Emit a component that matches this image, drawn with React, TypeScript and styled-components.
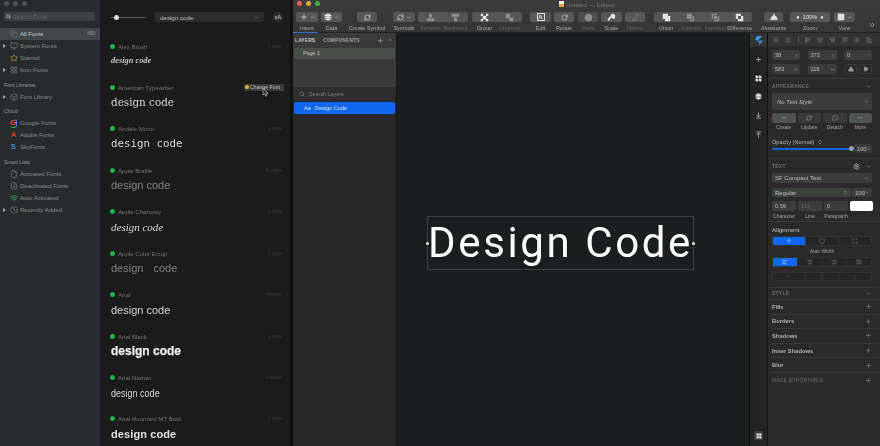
import { ReactNode } from "react";
import styled, { createGlobalStyle } from "styled-components";
import {
  ArrowDownToLine, ArrowUpToLine, ChevronDown, ChevronsRight, ChevronsUpDown, Clock,
  Copy, ConciergeBell, File, FileX, Layers, LayoutGrid, Monitor,
  MoreHorizontal, PanelLeft, PenLine, Plus, RefreshCw, RotateCw, Search, Settings,
  Star, Triangle, Play, Unlink, Wifi, Box, AlignLeft, AlignCenter, AlignRight, AlignJustify, SquareDashed,
  Maximize, ArrowUp, ArrowDown, MoveVertical, AlignStartVertical, AlignCenterVertical, AlignEndVertical,
  AlignStartHorizontal, AlignCenterHorizontal, AlignEndHorizontal, AlignHorizontalSpaceAround, AlignVerticalSpaceAround,
} from "lucide-react";

const Global = createGlobalStyle`
  html, body { margin: 0; padding: 0; background: #1a1a1a; }
  * { box-sizing: border-box; }
`;

const Screen = styled.div`
  width: 880px;
  height: 446px;
  display: flex;
  overflow: hidden;
  font-family: "Liberation Sans", Arial, sans-serif;
  filter: blur(0.35px);
`;

/* left: font manager sidebar */
const Sidebar = styled.aside`
  width: 100px;
  flex: none;
  background: #262c2d;
  display: flex;
  flex-direction: column;
`;

const Lights = styled.div<{ $x: number; $gap: number }>`
  height: 8px;
  display: flex;
  gap: ${(p) => p.$gap}px;
  padding: 1px 0 0 ${(p) => p.$x}px;
  flex: none;
`;

const Light = styled.span<{ $c: string }>`
  width: 5px;
  height: 5px;
  border-radius: 50%;
  background: ${(p) => p.$c};
`;

const SearchBox = styled.div`
  height: 9px;
  margin: 4px 5px 7px 4px;
  background: #3a4142;
  border-radius: 2px;
  display: flex;
  align-items: center;
  gap: 2px;
  padding-left: 2px;
  font-size: 5.8px;
  color: #656c6d;
`;

const SideHeader = styled.div`
  height: 12px;
  margin-top: 3px;
  padding-left: 4px;
  line-height: 12px;
  font-size: 5.2px;
  color: #8f9596;
`;

const SideRow = styled.div<{ $active?: boolean }>`
  height: 11.9px;
  display: flex;
  align-items: center;
  position: relative;
  padding-left: 9px;
  font-size: 6px;
  color: ${(p) => (p.$active ? "#c4c9c9" : "#848b8c")};
  background: ${(p) => (p.$active ? "#414849" : "transparent")};
`;

const SideIcon = styled.span`
  width: 9px;
  display: flex;
  justify-content: center;
  margin-right: 2px;
  color: #727879;
`;

const Caret = styled.i`
  position: absolute;
  left: 3px;
  top: 4px;
  border-left: 3px solid #9aa0a1;
  border-top: 2px solid transparent;
  border-bottom: 2px solid transparent;
`;

const Count = styled.span`
  margin-left: auto;
  margin-right: 5px;
  font-size: 4.6px;
  color: #9aa0a1;
`;

const BrandG = styled.span`
  font-size: 8px;
  font-weight: bold;
  line-height: 8px;
  color: #e8483b;
  border-right: 1px solid #3c82f0;
  border-bottom: 1px solid #35a853;
  border-radius: 3px;
`;

const BrandA = styled.span<{ $c: string }>`
  font-size: 8px;
  font-weight: bold;
  line-height: 8px;
  color: ${(p) => p.$c};
`;

/* middle: list of font samples */
const FontPane = styled.section`
  width: 190px;
  flex: none;
  background: #1b1b1b;
  padding-top: 12px;
`;

const FontBar = styled.div`
  height: 10px;
  margin-bottom: 20px;
  display: flex;
  align-items: center;
  padding-left: 11px;
`;

const SizeTrack = styled.div`
  width: 35px;
  height: 1px;
  background: #555;
  position: relative;
  margin-right: 9px;
`;

const SizeKnob = styled.i`
  position: absolute;
  left: 3px;
  top: -2px;
  width: 5px;
  height: 5px;
  border-radius: 50%;
  background: #ddd;
`;

const SampleSelect = styled.div`
  width: 109px;
  height: 10px;
  background: #2c2c2c;
  border-radius: 2px;
  padding: 0 5px;
  display: flex;
  align-items: center;
  justify-content: space-between;
  font-size: 6.2px;
  color: #c0c0c0;
`;

const CaseButton = styled.div`
  width: 10px;
  height: 10px;
  margin-left: 9px;
  border-radius: 50%;
  background: #2e2e2e;
  color: #aaa;
  font-size: 5px;
  font-weight: bold;
  line-height: 10px;
  text-align: center;
`;

const FontRow = styled.div`
  height: 41.45px;
  padding: 0 8px 0 10px;
  position: relative;
`;

const FontHead = styled.div`
  height: 8px;
  display: flex;
  align-items: center;
  font-size: 6.1px;
  color: #737373;
`;

const Dot = styled.i`
  width: 5px;
  height: 5px;
  border-radius: 50%;
  background: #1fae4f;
  margin-right: 3px;
`;

const Styles = styled.span`
  margin-left: auto;
  font-size: 4.8px;
  color: #3a3a3a;
`;

const ChangeFont = styled.span`
  margin-left: auto;
  margin-right: -2px;
  width: 40px;
  height: 7px;
  background: #3b3b3b;
  border-radius: 1px;
  display: flex;
  align-items: center;
  gap: 1px;
  padding-left: 1px;
  font-size: 5.2px;
  color: #c0c0c0;
`;

const Bulb = styled.i`
  width: 4px;
  height: 4px;
  border-radius: 50% 50% 40% 40%;
  background: #e5aa24;
`;

const PointerMark = styled.svg`
  position: absolute;
  left: 162px;
  top: 5px;
`;

const sampleStyles: Record<string, string> = {
  brush: `font: italic bold 8.4px/14px "Liberation Serif", serif; color: #c4c4c4;`,
  typewriter: `font: 10.4px/14px "DejaVu Serif", serif; color: #d4d4d4;`,
  mono: `font: 10.8px/14px "DejaVu Sans Mono", monospace; color: #d8d8d8;`,
  braille: `font: 11px/14px "Liberation Sans", sans-serif; color: #808080;`,
  chancery: `font: italic 11px/14px "Liberation Serif", serif; color: #d8d8d8;`,
  emoji: `font: 11px/14px "Liberation Sans", sans-serif; color: #808080; word-spacing: 7px;`,
  arial: `font: 11px/14px "Liberation Sans", sans-serif; color: #d4d4d4;`,
  black: `font: bold 12px/14px "Liberation Sans", sans-serif; color: #ececec; -webkit-text-stroke: 0.25px #ececec;`,
  narrow: `font: 11px/14px "Liberation Sans", sans-serif; color: #d4d4d4; transform: scaleX(0.82); transform-origin: left;`,
  rounded: `font: bold 11px/14px "Liberation Sans", sans-serif; color: #e0e0e0; letter-spacing: 0.1px;`,
};

const Sample = styled.div<{ $kind: string }>`
  margin: 4px 0 0 1px;
  height: 14px;
  line-height: 14px;
  white-space: pre;
  ${(p) => sampleStyles[p.$kind]}
`;

const Gutter = styled.div`
  width: 3px;
  flex: none;
  background: #111;
`;

/* right: sketch window */
const Sketch = styled.main`
  flex: 1;
  min-width: 0;
  display: flex;
  flex-direction: column;
`;

const TitleBar = styled.header`
  height: 33px;
  flex: none;
  background: linear-gradient(#3c3c3c, #353535);
  border-bottom: 1px solid #222;
  position: relative;
`;

const WindowTitle = styled.div`
  position: absolute;
  left: 266px;
  top: 0;
  display: flex;
  align-items: center;
  gap: 2px;
  height: 8px;
  font-size: 6.2px;
  color: #737373;
`;

const DocIcon = styled.i`
  width: 5px;
  height: 6px;
  background: linear-gradient(#eee 50%, #d9a93a 50%);
`;

const Tools = styled.div`
  display: flex;
  margin-top: 4px;
`;

const Tool = styled.div<{ $w: number; $ml: number }>`
  width: ${(p) => p.$w}px;
  margin-left: ${(p) => p.$ml}px;
  flex: none;
`;

const ToolBtn = styled.div<{ $bg?: string }>`
  height: 10px;
  border-radius: 2px;
  background: ${(p) => p.$bg || "#565656"};
  display: flex;
  align-items: center;
  justify-content: center;
  color: #e4e4e4;
  font-size: 5.6px;
`;

const ToolCell = styled.span<{ $dim?: boolean }>`
  flex: 1 1 0;
  min-width: 0;
  display: flex;
  justify-content: center;
  align-items: center;
  gap: 2px;
  white-space: nowrap;
  color: ${(p) => (p.$dim ? "#8d8d8d" : "#e4e4e4")};
`;

const ToolLabels = styled.div`
  display: flex;
  margin-top: 3px;
`;

const ToolLabel = styled.span<{ $dim?: boolean }>`
  flex: 1 1 0;
  min-width: 0;
  display: flex;
  justify-content: center;
  white-space: nowrap;
  font-size: 5.5px;
  line-height: 6px;
  color: ${(p) => (p.$dim ? "#626262" : "#a8a8a8")};
`;

const LetterBox = styled.span`
  border: 1px solid #ddd;
  width: 8px;
  height: 8px;
  font-size: 6px;
  font-weight: bold;
  line-height: 6px;
  text-align: center;
`;

const Overflow = styled.div`
  margin: 3px 0 0 13px;
  color: #a9a9a9;
`;

const Body = styled.div`
  flex: 1;
  display: flex;
  min-height: 0;
`;

const LayersPane = styled.nav`
  width: 104px;
  flex: none;
  background: #272727;
  border-right: 1px solid #161616;
  display: flex;
  flex-direction: column;
`;

const PagesBlock = styled.div`
  height: 54px;
  background: #3a3a3a;
  position: relative;
`;

const TabMark = styled.i`
  position: absolute;
  left: 0;
  top: -1px;
  width: 25px;
  height: 1px;
  background: #2f6fd0;
`;

const Tabs = styled.div`
  height: 15px;
  display: flex;
  align-items: center;
  gap: 8px;
  padding: 0 3px 0 2px;
  font-size: 4.8px;
  font-weight: bold;
  letter-spacing: 0.2px;
  color: #9a9a9a;
`;

const ActiveTab = styled.span`
  color: #c8c8c8;
`;

const TabRight = styled.span`
  margin-left: auto;
  display: flex;
  gap: 3px;
  color: #a5a5a5;
`;

const PageRow = styled.div`
  height: 11px;
  margin: 0 1px;
  padding-left: 9px;
  background: #4a4f4a;
  border-radius: 2px;
  font-size: 5.4px;
  line-height: 11px;
  color: #c0c0c0;
`;

const LayerSearch = styled.div`
  height: 14px;
  background: #2d2d2d;
  display: flex;
  align-items: center;
  gap: 4px;
  padding-left: 6px;
  font-size: 5.4px;
  color: #808080;
`;

const LayerRow = styled.div`
  height: 12px;
  margin: 1px 1px 0;
  padding-left: 10px;
  display: flex;
  align-items: center;
  gap: 4px;
  background: #0f67f0;
  border-radius: 2px;
  font-size: 5.6px;
  color: #dfe7fa;
`;

const Canvas = styled.div`
  flex: 1;
  background: #1a1e1e;
  padding: 183px 55px 0 30px;
`;

const TextBox = styled.div`
  width: 267px;
  height: 54px;
  border: 1px solid #3a4141;
  position: relative;
  display: flex;
  align-items: center;
  justify-content: center;
  font: 42px/52px Roboto, sans-serif;
  letter-spacing: 2.6px;
  color: #fff;
  white-space: nowrap;
`;

const Handle = styled.i<{ $right?: boolean }>`
  position: absolute;
  top: 25px;
  ${(p) => (p.$right ? "right: -2px" : "left: -2px")};
  width: 3px;
  height: 3px;
  background: #eee;
  border-radius: 50%;
`;

const ToolStrip = styled.div`
  width: 19px;
  flex: none;
  background: #232323;
  border-left: 1px solid #111;
  border-right: 1px solid #111;
  display: flex;
  flex-direction: column;
  align-items: center;
`;

const StripTop = styled.div`
  width: 100%;
  height: 14px;
  background: #333;
  display: flex;
  align-items: center;
  justify-content: center;
  margin-bottom: 3.5px;
`;

const StripIcon = styled.div`
  height: 18.6px;
  display: flex;
  align-items: center;
  color: #e0e0e0;
`;

const StripBottom = styled.div`
  margin-top: auto;
  margin-bottom: 6px;
  width: 9px;
  height: 9px;
  background: #3a3a3a;
  border-radius: 1px;
  display: flex;
  align-items: center;
  justify-content: center;
  color: #e0e0e0;
`;

const Inspector = styled.aside`
  width: 112px;
  flex: none;
  background: #2a2a2a;
  font-size: 5.6px;
  color: #b4b4b4;
`;

const AlignBar = styled.div`
  height: 13px;
  background: #333;
  display: flex;
  align-items: center;
  justify-content: space-between;
  padding: 0 8px 0 5px;
  color: #767676;
`;

const AlignSep = styled.i`
  width: 1px;
  height: 6px;
  background: #555;
`;

const Section = styled.div<{ $pb?: number }>`
  padding: 0 8px ${(p) => p.$pb ?? 0}px 4px;
  border-bottom: 1px solid #393939;
`;

const PosRow = styled.div<{ $mt: number }>`
  display: flex;
  justify-content: space-between;
  margin-top: ${(p) => p.$mt}px;
`;

const Field = styled.div<{ $w?: number; $dim?: boolean; $white?: boolean; $h?: number }>`
  width: ${(p) => p.$w ?? 24}px;
  height: ${(p) => p.$h ?? 10}px;
  padding: 0 2px 0 3px;
  background: ${(p) => (p.$white ? "#fff" : "#3c3c3c")};
  border-radius: 2px;
  display: flex;
  align-items: center;
  justify-content: space-between;
  color: ${(p) => (p.$dim ? "#626262" : "#bcbcbc")};
`;

const Suffix = styled.span`
  font-size: 4.4px;
  color: #787878;
`;

const FlipGroup = styled.div`
  display: flex;
  gap: 2px;
`;

const FlipBtn = styled.div`
  width: 13px;
  height: 10px;
  border: 1px solid #383838;
  border-radius: 2px;
  display: flex;
  align-items: center;
  justify-content: center;
  color: #9a9a9a;
`;

const Head = styled.div<{ $h: number; $bright?: boolean }>`
  height: ${(p) => p.$h}px;
  display: flex;
  align-items: center;
  justify-content: space-between;
  font-size: ${(p) => (p.$bright ? 6.2 : 4.9)}px;
  font-weight: ${(p) => (p.$bright ? "normal" : "bold")};
  letter-spacing: ${(p) => (p.$bright ? 0 : 0.3)}px;
  color: ${(p) => (p.$bright ? "#c4c4c4" : "#6e6e6e")};
`;

const HeadIcons = styled.span`
  display: flex;
  align-items: center;
  gap: 5px;
  color: #8c8c8c;
`;

const Select = styled.div<{ $h: number; $italic?: boolean; $w?: number; $green?: boolean }>`
  height: ${(p) => p.$h}px;
  width: ${(p) => (p.$w ? `${p.$w}px` : "100%")};
  padding: 0 3px 0 ${(p) => (p.$italic ? 5 : 3)}px;
  background: ${(p) => (p.$green ? "#3b423a" : "#3c3c3c")};
  border-radius: 2px;
  display: flex;
  align-items: center;
  justify-content: space-between;
  font-style: ${(p) => (p.$italic ? "italic" : "normal")};
  font-size: 6px;
  color: #bcbcbc;
`;

const Quad = styled.div<{ $mt?: number }>`
  display: grid;
  grid-template-columns: repeat(4, 1fr);
  column-gap: 2px;
  margin-top: ${(p) => p.$mt ?? 3}px;
`;

const QuadBtn = styled.div<{ $on?: boolean }>`
  height: 10px;
  background: ${(p) => (p.$on ? "#4d5450" : "#393939")};
  border-radius: 2px;
  display: flex;
  align-items: center;
  justify-content: center;
  color: #9a9a9a;
`;

const QuadLabel = styled.div<{ $h?: number }>`
  height: ${(p) => p.$h ?? 9}px;
  line-height: ${(p) => p.$h ?? 9}px;
  text-align: center;
  font-size: 5px;
  white-space: nowrap;
  color: #a0a0a0;
`;

const OpacityRow = styled.div`
  height: 16px;
  margin-top: 5px;
  display: flex;
  justify-content: space-between;
  align-items: flex-end;
`;

const OpacityLeft = styled.div`
  width: 80px;
  height: 16px;
`;

const OpacityLabel = styled.div`
  height: 10px;
  line-height: 10px;
  font-size: 5.6px;
  display: flex;
  align-items: center;
  gap: 3px;
`;

const OpacityTrack = styled.div`
  height: 2px;
  margin-top: 0.5px;
  background: #1160d8;
  position: relative;
  border-radius: 1px;
`;

const OpacityKnob = styled.i`
  position: absolute;
  right: -2px;
  top: -1.5px;
  width: 5px;
  height: 5px;
  border-radius: 50%;
  background: #9aa0ac;
`;

const Segments = styled.div<{ $mt?: number; $h: number }>`
  height: ${(p) => p.$h}px;
  margin-top: ${(p) => p.$mt ?? 0}px;
  display: flex;
  border: 1px solid #333;
  border-radius: 2px;
  background: #262626;
`;

const Segment = styled.div<{ $on?: boolean; $dim?: boolean }>`
  flex: 1;
  display: flex;
  align-items: center;
  justify-content: center;
  background: ${(p) => (p.$on ? "#0f67f0" : "transparent")};
  color: ${(p) => (p.$on ? "#dfe9ff" : p.$dim ? "#4b4b4b" : "#8a8a8a")};
  border-right: 1px solid #333;
  &:last-child { border-right: none; }
`;

const AutoWidth = styled.div`
  height: 11px;
  line-height: 11px;
  text-align: center;
  font-size: 5px;
  color: #a0a0a0;
`;

const StyleRow = styled.div<{ $caps?: boolean; $last?: boolean }>`
  height: 14.6px;
  margin-left: 4px;
  padding-right: 8px;
  display: flex;
  align-items: center;
  justify-content: space-between;
  border-bottom: ${(p) => (p.$last ? "none" : "1px solid #393939")};
  font-size: ${(p) => (p.$caps ? 4.9 : 5.8)}px;
  font-weight: ${(p) => (p.$caps ? "normal" : "bold")};
  letter-spacing: ${(p) => (p.$caps ? 0.3 : 0)}px;
  color: ${(p) => (p.$caps ? "#6e6e6e" : "#b0b0b0")};
  svg { color: #808080; }
`;

const ic = (Icon: typeof Plus, size = 8, fill?: string) => <Icon size={size} strokeWidth={2} fill={fill || "none"} />;

// small toolbar drawings that have no good match in the icon package
const Glyph = ({ d, size = 9 }: { d: string; size?: number }) => (
  <svg width={size} height={size} viewBox="0 0 12 12" fill="currentColor">
    <path d={d} />
  </svg>
);

const forward = "M4 1h4v5H4z M1 7h10v4H1z";
const backward = "M1 1h10v4H1z M4 6h4v5H4z";
const group = "M1 1h3v3H1z M8 1h3v3H8z M1 8h3v3H1z M8 8h3v3H8z M3.5 3.5h5v5h-5z";
const ungroup = "M1 1h6v6H1z M6 6h5v5H6z";
const union = "M1 1h7v3h3v7H4V8H1z";
const overlapA = "M1 1h7v7H1z M9 4h2v7H4V9h5z";
const overlapB = "M4 4h4v4H4z M1 1h7v2H3v5H1z M9 4h2v7H4V9h5z";
const overlapC = "M1 1h7v3H4v4H1z M8 4h3v7H4V8h4z";
const scale = "M7 1a4 4 0 0 1 4 4c0 2-1.5 3-3 3L6 6 4 8.5 3 11 1 9c0-2 1-3 3-4l1-2c.5-1 1-2 2-2z";

type ToolDef = { w: number; ml: number; labels: string[]; cells: ReactNode[]; dim?: boolean[]; bg?: string };

const tools: ToolDef[] = [
  { w: 22, ml: 3, labels: ["Insert"], cells: [<>{ic(Plus)}{ic(ChevronDown, 5)}</>] },
  { w: 21, ml: 3, labels: ["Data"], cells: [<>{ic(Layers, 8, "#ddd")}{ic(ChevronDown, 5)}</>] },
  { w: 20, ml: 15, labels: ["Create Symbol"], cells: [ic(RefreshCw, 7)] },
  { w: 22, ml: 16, labels: ["Symbols"], cells: [<>{ic(RefreshCw, 7)}{ic(ChevronDown, 5)}</>] },
  { w: 50, ml: 3, labels: ["Forward", "Backward"], cells: [<Glyph d={forward} />, <Glyph d={backward} />], dim: [true, true] },
  { w: 50, ml: 4, labels: ["Group", "Ungroup"], cells: [<Glyph d={group} />, <Glyph d={ungroup} />], dim: [false, true] },
  { w: 21, ml: 8, labels: ["Edit"], cells: [<LetterBox>A</LetterBox>] },
  { w: 20, ml: 3, labels: ["Rotate"], cells: [ic(RotateCw, 7)] },
  { w: 20, ml: 4, labels: ["Mask"], cells: [<Glyph d="M6 1a5 5 0 1 1 0 10A5 5 0 0 1 6 1z" />], dim: [true], bg: "#4d4d4d" },
  { w: 21, ml: 3, labels: ["Scale"], cells: [<Glyph d={scale} />] },
  { w: 20, ml: 3, labels: ["Flatten"], cells: [ic(PenLine, 7)], dim: [true] },
  {
    w: 98, ml: 9, labels: ["Union", "Subtract", "Intersect", "Difference"],
    cells: [<Glyph d={union} />, <Glyph d={overlapA} />, <Glyph d={overlapB} />, <Glyph d={overlapC} />],
    dim: [false, true, true, false],
  },
  { w: 19, ml: 12, labels: ["Assistants"], cells: [ic(ConciergeBell, 8, "#e4e4e4")] },
  { w: 40, ml: 7, labels: ["Zoom"], cells: [<>● &nbsp;100% &nbsp;●</>] },
  { w: 21, ml: 4, labels: ["View"], cells: [<>{ic(PanelLeft, 8, "#ddd")}{ic(ChevronDown, 5)}</>] },
];

type SideItem =
  | { head: string }
  | { name: string; icon: ReactNode; caret?: boolean; active?: boolean; count?: string };

const sideItems: SideItem[] = [
  { name: "All Fonts", icon: ic(Copy), active: true, count: "890" },
  { name: "System Fonts", icon: ic(Monitor), caret: true },
  { name: "Starred", icon: <Star size={8} color="#c9a227" strokeWidth={2} /> },
  { name: "Icon Fonts", icon: ic(LayoutGrid), caret: true },
  { head: "Font Libraries" },
  { name: "Font Library", icon: ic(Box), caret: true },
  { head: "Cloud" },
  { name: "Google Fonts", icon: <BrandG>G</BrandG> },
  { name: "Adobe Fonts", icon: <BrandA $c="#d5342b">A</BrandA> },
  { name: "SkyFonts", icon: <BrandA $c="#3a86d8">S</BrandA> },
  { head: "Smart Lists" },
  { name: "Activated Fonts", icon: ic(File) },
  { name: "Deactivated Fonts", icon: ic(FileX) },
  { name: "Auto Activated", icon: <Wifi size={8} color="#27a04f" strokeWidth={2.5} /> },
  { name: "Recently Added", icon: ic(Clock), caret: true },
];

const fonts = [
  { name: "Alex Brush", styles: "1 style", kind: "brush" },
  { name: "American Typewriter", styles: "", kind: "typewriter" },
  { name: "Andale Mono", styles: "1 style", kind: "mono" },
  { name: "Apple Braille", styles: "5 styles", kind: "braille" },
  { name: "Apple Chancery", styles: "1 style", kind: "chancery" },
  { name: "Apple Color Emoji", styles: "1 style", kind: "emoji" },
  { name: "Arial", styles: "4 styles", kind: "arial" },
  { name: "Arial Black", styles: "1 style", kind: "black" },
  { name: "Arial Narrow", styles: "4 styles", kind: "narrow" },
  { name: "Arial Rounded MT Bold", styles: "1 style", kind: "rounded" },
];

const styleRows = ["Fills", "Borders", "Shadows", "Inner Shadows", "Blur"];

function App() {
  return (
    <Screen>
      <Global />
      <Sidebar>
        <Lights $x={4} $gap={4}>
          <Light $c="#4b5152" />
          <Light $c="#4b5152" />
          <Light $c="#4b5152" />
        </Lights>
        <SearchBox>
          <Search size={5} color="#c4c8c8" strokeWidth={3} />
          Search Fonts
        </SearchBox>
        {sideItems.map((item) =>
          "head" in item ? (
            <SideHeader key={item.head}>{item.head}</SideHeader>
          ) : (
            <SideRow key={item.name} $active={item.active}>
              {item.caret && <Caret />}
              <SideIcon>{item.icon}</SideIcon>
              {item.name}
              {item.count && <Count>{item.count}</Count>}
            </SideRow>
          )
        )}
      </Sidebar>

      <FontPane>
        <FontBar>
          <SizeTrack>
            <SizeKnob />
          </SizeTrack>
          <SampleSelect>
            design code
            <ChevronDown size={5} color="#888" />
          </SampleSelect>
          <CaseButton>aA</CaseButton>
        </FontBar>
        {fonts.map((f) => (
          <FontRow key={f.name}>
            <FontHead>
              <Dot />
              {f.name}
              {f.styles ? (
                <Styles>{f.styles}</Styles>
              ) : (
                <ChangeFont>
                  <Bulb />
                  Change Font
                </ChangeFont>
              )}
            </FontHead>
            {!f.styles && (
              <PointerMark width="7" height="9" viewBox="0 0 7 9">
                <path d="M1 0.5 L1 7 L2.6 5.6 L3.8 8.2 L5 7.6 L3.8 5.2 L6 5.2 Z" fill="#222" stroke="#ddd" strokeWidth="0.6" />
              </PointerMark>
            )}
            <Sample $kind={f.kind}>design code</Sample>
          </FontRow>
        ))}
      </FontPane>

      <Gutter />

      <Sketch>
        <TitleBar>
          <Lights $x={4} $gap={4}>
            <Light $c="#ec5f57" />
            <Light $c="#e0a82e" />
            <Light $c="#3fb24a" />
          </Lights>
          <WindowTitle>
            <DocIcon />
            Untitled — Edited
          </WindowTitle>
          <Tools>
            {tools.map((t) => (
              <Tool key={t.labels[0]} $w={t.w} $ml={t.ml}>
                <ToolBtn $bg={t.bg}>
                  {t.cells.map((c, i) => (
                    <ToolCell key={i} $dim={t.dim?.[i]}>
                      {c}
                    </ToolCell>
                  ))}
                </ToolBtn>
                <ToolLabels>
                  {t.labels.map((l, i) => (
                    <ToolLabel key={l} $dim={t.dim?.[i]}>
                      {l}
                    </ToolLabel>
                  ))}
                </ToolLabels>
              </Tool>
            ))}
            <Overflow>{ic(ChevronsRight, 8)}</Overflow>
          </Tools>
        </TitleBar>

        <Body>
          <LayersPane>
            <PagesBlock>
              <TabMark />
              <Tabs>
                <ActiveTab>LAYERS</ActiveTab>
                COMPONENTS
                <TabRight>
                  {ic(Plus, 7)}
                  <ChevronDown size={6} style={{ transform: "rotate(180deg)" }} />
                </TabRight>
              </Tabs>
              <PageRow>Page 1</PageRow>
            </PagesBlock>
            <LayerSearch>
              <Search size={6} />
              Search Layers
            </LayerSearch>
            <LayerRow>
              <span>Aa</span>
              Design Code
            </LayerRow>
          </LayersPane>

          <Canvas>
            <TextBox>
              <Handle />
              Design Code
              <Handle $right />
            </TextBox>
          </Canvas>

          <ToolStrip>
            <StripTop>
              <svg width="10" height="9" viewBox="0 0 10 9">
                <path d="M3 0 L8 0 L4.5 4 L1 4 Z" fill="#3a9bf0" />
                <path d="M2 4.5 L9.5 4.5 L5 9 L5.5 6.5 Z" fill="#2f86dc" />
              </svg>
            </StripTop>
            <StripIcon>{ic(Plus, 7)}</StripIcon>
            <StripIcon>{ic(LayoutGrid, 7, "#e0e0e0")}</StripIcon>
            <StripIcon>{ic(Layers, 7, "#e0e0e0")}</StripIcon>
            <StripIcon>{ic(ArrowDownToLine, 7)}</StripIcon>
            <StripIcon>{ic(ArrowUpToLine, 7)}</StripIcon>
            <StripBottom>{ic(LayoutGrid, 6, "#e0e0e0")}</StripBottom>
          </ToolStrip>

          <Inspector>
            <AlignBar>
              {ic(AlignHorizontalSpaceAround, 6)}
              {ic(AlignVerticalSpaceAround, 6)}
              <AlignSep />
              {ic(AlignStartVertical, 6)}
              {ic(AlignCenterVertical, 6)}
              {ic(AlignEndVertical, 6)}
              {ic(AlignStartHorizontal, 6)}
              {ic(AlignCenterHorizontal, 6)}
              {ic(AlignEndHorizontal, 6)}
            </AlignBar>
            <Section $pb={4}>
              <PosRow $mt={4}>
                <Field $w={28}>38<Suffix>X</Suffix></Field>
                <Field $w={29}>373<Suffix>Y</Suffix></Field>
                <Field $w={28}>0<Suffix>°</Suffix></Field>
              </PosRow>
              <PosRow $mt={4}>
                <Field $w={28}>583<Suffix>W</Suffix></Field>
                <Field $w={29}>119<Suffix>H</Suffix></Field>
                <FlipGroup>
                  <FlipBtn><Triangle size={6} fill="#9a9a9a" /></FlipBtn>
                  <FlipBtn><Play size={6} fill="#9a9a9a" /></FlipBtn>
                </FlipGroup>
              </PosRow>
            </Section>

            <Section $pb={5}>
              <Head $h={14}>
                APPEARANCE
                <HeadIcons>{ic(ChevronDown, 7)}</HeadIcons>
              </Head>
              <Select $h={17} $italic>
                No Text Style
                <ChevronDown size={5} />
              </Select>
              <Quad>
                <QuadBtn $on>{ic(Plus, 6)}</QuadBtn>
                <QuadBtn>{ic(RefreshCw, 6)}</QuadBtn>
                <QuadBtn>{ic(Unlink, 6)}</QuadBtn>
                <QuadBtn $on>{ic(MoreHorizontal, 6)}</QuadBtn>
                <QuadLabel>Create</QuadLabel>
                <QuadLabel>Update</QuadLabel>
                <QuadLabel>Detach</QuadLabel>
                <QuadLabel>More</QuadLabel>
              </Quad>
              <OpacityRow>
                <OpacityLeft>
                  <OpacityLabel>
                    Opacity (Normal) {ic(ChevronsUpDown, 6)}
                  </OpacityLabel>
                  <OpacityTrack>
                    <OpacityKnob />
                  </OpacityTrack>
                </OpacityLeft>
                <Field $w={18} $h={9}>100<Suffix>%</Suffix></Field>
              </OpacityRow>
            </Section>

            <Section>
              <Head $h={14}>
                TEXT
                <HeadIcons>
                  <Settings size={7} color="#c4c4c4" />
                  {ic(ChevronDown, 7)}
                </HeadIcons>
              </Head>
              <Select $h={10}>
                SF Compact Text
                <ChevronDown size={5} />
              </Select>
              <PosRow $mt={5}>
                <Select $h={9} $w={79} $green>
                  Regular
                  <ChevronsUpDown size={5} />
                </Select>
                <Select $h={9} $w={20}>
                  100
                  <ChevronDown size={5} />
                </Select>
              </PosRow>
              <Quad $mt={4}>
                <Field $w={24}>0.59</Field>
                <Field $w={24} $dim>119</Field>
                <Field $w={24}>0</Field>
                <Field $w={23} $white />
                <QuadLabel $h={10}>Character</QuadLabel>
                <QuadLabel $h={10}>Line</QuadLabel>
                <QuadLabel $h={10}>Paragraph</QuadLabel>
                <span />
              </Quad>
            </Section>

            <Section $pb={6}>
              <Head $h={14} $bright>
                Alignment
              </Head>
              <Segments $h={10}>
                <Segment $on>{ic(ArrowUp, 6)}</Segment>
                <Segment>{ic(SquareDashed, 6)}</Segment>
                <Segment>{ic(Maximize, 6)}</Segment>
              </Segments>
              <AutoWidth>Auto Width</AutoWidth>
              <Segments $h={10}>
                <Segment $on>{ic(AlignLeft, 6)}</Segment>
                <Segment>{ic(AlignCenter, 6)}</Segment>
                <Segment>{ic(AlignRight, 6)}</Segment>
                <Segment>{ic(AlignJustify, 6)}</Segment>
              </Segments>
              <Segments $h={9} $mt={5}>
                <Segment $dim>{ic(ArrowUp, 6)}</Segment>
                <Segment $dim>{ic(MoveVertical, 6)}</Segment>
                <Segment $dim>{ic(ArrowDown, 6)}</Segment>
              </Segments>
            </Section>

            <Section>
              <Head $h={11}>
                STYLE
                <HeadIcons>{ic(ChevronDown, 7)}</HeadIcons>
              </Head>
            </Section>

            {styleRows.map((r) => (
              <StyleRow key={r}>
                {r}
                {ic(Plus, 7)}
              </StyleRow>
            ))}
            <StyleRow $caps $last>
              MAKE EXPORTABLE
              {ic(Plus, 7)}
            </StyleRow>
          </Inspector>
        </Body>
      </Sketch>
    </Screen>
  );
}

export default App;
